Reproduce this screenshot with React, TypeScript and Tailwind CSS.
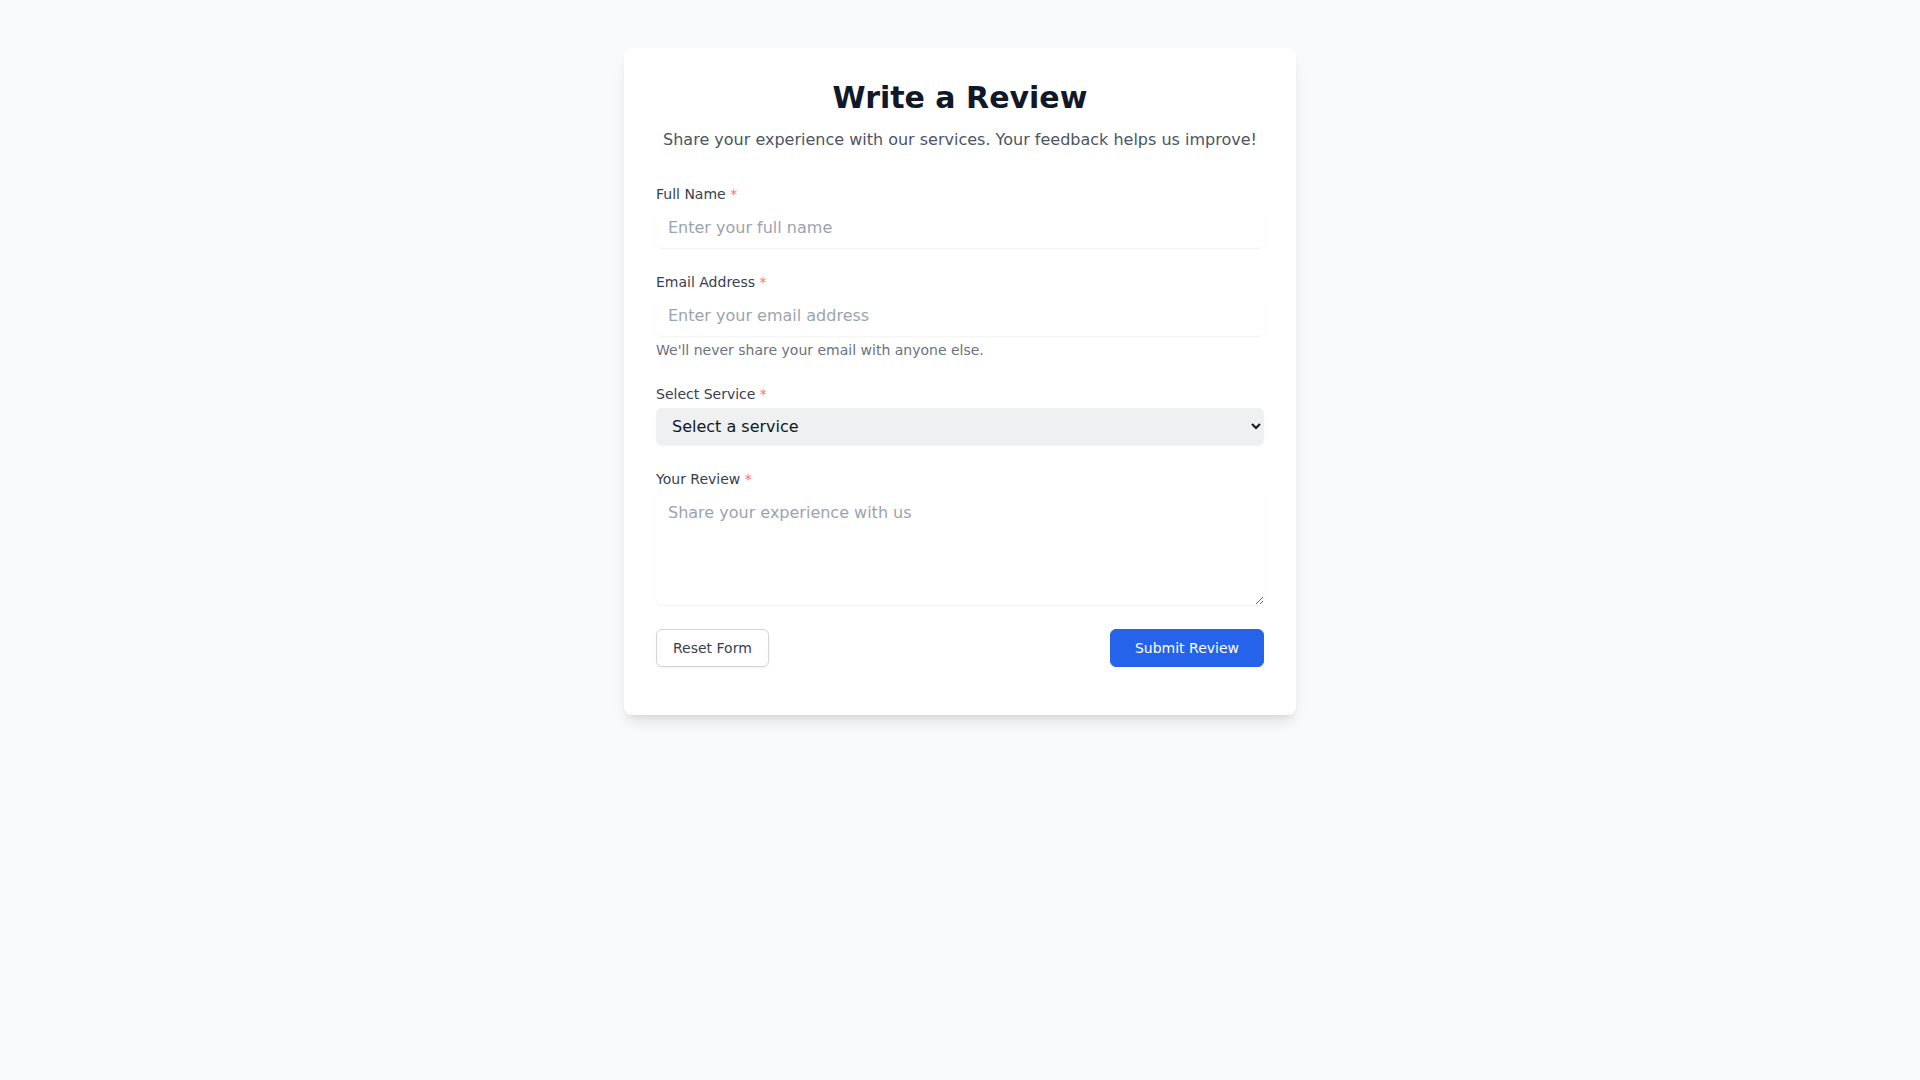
import { useState } from "react";

const services = ["Web Design", "Development", "Consulting", "Support"];

function Label({ htmlFor, children }: { htmlFor: string; children: React.ReactNode }) {
    return (
        <label htmlFor={htmlFor} className="block text-sm text-[#374151]">
            {children} <span className="text-[#f87171]">*</span>
        </label>
    );
}

const field =
    "mt-1 block w-full rounded-md px-3 py-2 text-base text-[#111827] shadow-[0_1px_2px_0_rgba(0,0,0,0.05)] outline-none placeholder:text-[#9ca3af]";

export default function App() {
    const [form, setForm] = useState({ name: "", email: "", service: "", review: "" });

    const update = (key: string) => (e: React.ChangeEvent<HTMLInputElement | HTMLSelectElement | HTMLTextAreaElement>) =>
        setForm({ ...form, [key]: e.target.value });

    return (
        <div className="min-h-screen bg-[#f9fafb] py-12 font-['DejaVu_Sans',sans-serif]">
            <div className="mx-auto max-w-2xl rounded-lg bg-white px-8 pt-8 pb-12 shadow-[0_10px_15px_-3px_rgba(0,0,0,0.1),0_4px_6px_-4px_rgba(0,0,0,0.1)]">
                <div className="mb-8 text-center">
                    <h1 className="text-3xl font-bold text-[#111827]">Write a Review</h1>
                    <p className="mt-3 text-base text-[#4b5563]">
                        Share your experience with our services. Your feedback helps us improve!
                    </p>
                </div>

                <form className="flex flex-col gap-6" onSubmit={(e) => e.preventDefault()}>
                    <div>
                        <Label htmlFor="name">Full Name</Label>
                        <input
                            id="name"
                            type="text"
                            value={form.name}
                            onChange={update("name")}
                            placeholder="Enter your full name"
                            className={field}
                        />
                    </div>

                    <div>
                        <Label htmlFor="email">Email Address</Label>
                        <input
                            id="email"
                            type="email"
                            value={form.email}
                            onChange={update("email")}
                            placeholder="Enter your email address"
                            className={field}
                        />
                        <p className="mt-1 text-sm text-[#6b7280]">We'll never share your email with anyone else.</p>
                    </div>

                    <div>
                        <Label htmlFor="service">Select Service</Label>
                        <select
                            id="service"
                            value={form.service}
                            onChange={update("service")}
                            className="mt-1 block w-full rounded-md bg-[#eff0f1] px-3 py-2 text-base text-[#111827] shadow-[0_1px_2px_0_rgba(0,0,0,0.05)] outline-none"
                        >
                            <option value="">Select a service</option>
                            {services.map((s) => (
                                <option key={s} value={s}>{s}</option>
                            ))}
                        </select>
                    </div>

                    <div>
                        <Label htmlFor="review">Your Review</Label>
                        <textarea
                            id="review"
                            rows={4}
                            value={form.review}
                            onChange={update("review")}
                            placeholder="Share your experience with us"
                            className={field}
                        />
                    </div>

                    <div className="flex items-center justify-between">
                        <button
                            type="button"
                            onClick={() => setForm({ name: "", email: "", service: "", review: "" })}
                            className="rounded-md border border-[#d1d5db] bg-white px-4 py-2 text-sm text-[#374151] shadow-[0_1px_2px_0_rgba(0,0,0,0.05)]"
                        >
                            Reset Form
                        </button>
                        <button
                            type="submit"
                            className="rounded-md border border-[#2563eb] bg-[#2563eb] px-6 py-2 text-sm text-white"
                        >
                            Submit Review
                        </button>
                    </div>
                </form>
            </div>
        </div>
    );
}
